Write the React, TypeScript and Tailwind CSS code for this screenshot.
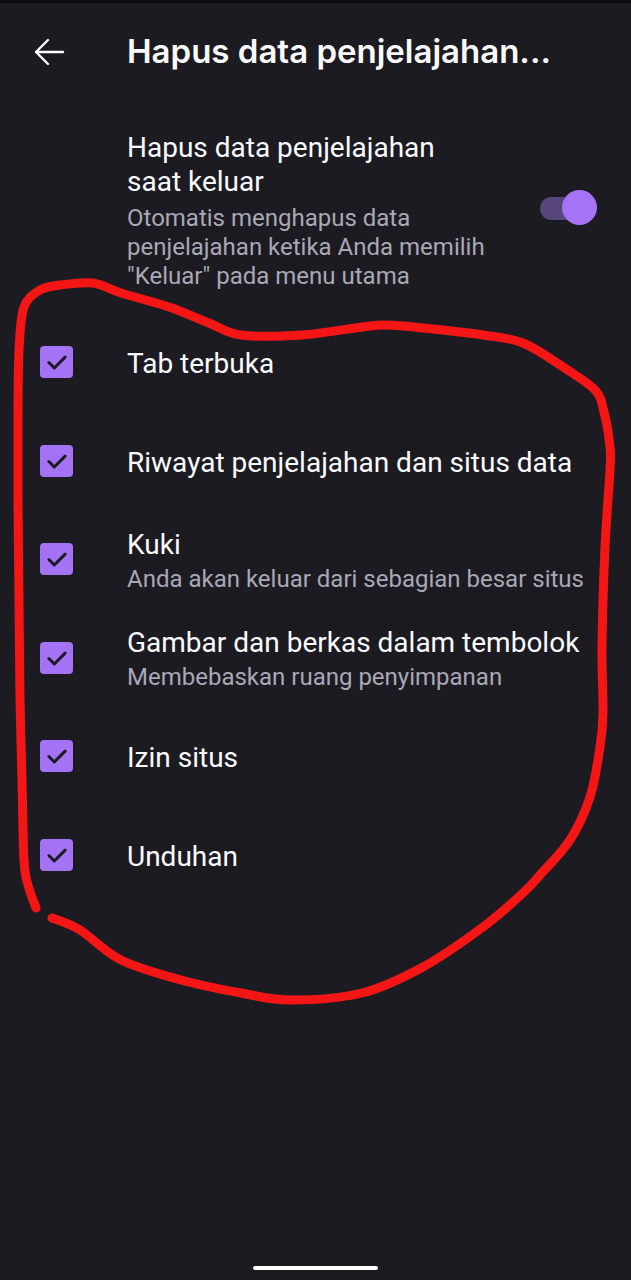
import React from "react";

const pts: [number, number][] = [
  [36, 908], [28, 885], [24, 860], [22, 780], [20, 700], [19, 600], [18, 500], [18, 420],
  [19, 350], [24, 307], [40, 290], [60, 285], [93, 283], [121, 293], [169, 307], [209, 323],
  [241, 335], [302, 335], [362, 327], [386, 325], [423, 328], [483, 335], [523, 343],
  [563, 367], [595, 390], [604, 412], [610, 447], [610, 470], [605, 547], [602, 647],
  [603, 713], [600, 747], [590, 797], [570, 840], [540, 875], [523, 893], [483, 927],
  [423, 967], [362, 993], [290, 1000], [241, 993], [181, 980], [121, 960], [80, 930], [52, 918],
];

function smooth(p: [number, number][]) {
  let d = `M ${p[0][0]} ${p[0][1]}`;
  for (let i = 0; i < p.length - 1; i++) {
    const p0 = p[i - 1] || p[i];
    const p1 = p[i];
    const p2 = p[i + 1];
    const p3 = p[i + 2] || p2;
    const c1x = p1[0] + (p2[0] - p0[0]) / 6;
    const c1y = p1[1] + (p2[1] - p0[1]) / 6;
    const c2x = p2[0] - (p3[0] - p1[0]) / 6;
    const c2y = p2[1] - (p3[1] - p1[1]) / 6;
    d += ` C ${c1x} ${c1y}, ${c2x} ${c2y}, ${p2[0]} ${p2[1]}`;
  }
  return d;
}

function Check() {
  return (
    <div className="w-[33px] h-[32px] rounded-[4px] bg-[#a372f5] flex items-center justify-center shrink-0">
      <svg width="26" height="26" viewBox="0 0 24 24" fill="none">
        <path d="M4.5 12.5 L9.5 17.5 L19.5 7.5" stroke="#1c1b22" strokeWidth="2.8" strokeLinecap="round" strokeLinejoin="round" />
      </svg>
    </div>
  );
}

const rows: { t: string; s?: string }[] = [
  { t: "Tab terbuka" },
  { t: "Riwayat penjelajahan dan situs data" },
  { t: "Kuki", s: "Anda akan keluar dari sebagian besar situs" },
  { t: "Gambar dan berkas dalam tembolok", s: "Membebaskan ruang penyimpanan" },
  { t: "Izin situs" },
  { t: "Unduhan" },
];

export default function App() {
  return (
    <div
      className="relative w-[631px] h-[1280px] bg-[#1c1b22] overflow-hidden text-[#fbfbfe]"
      style={{ fontFamily: "Roboto, 'Noto Sans', sans-serif" }}
    >
      <div className="h-[3px] bg-[#0c0b10]" />
      <div className="h-[97px] flex items-center pl-[33px]">
        <svg width="32" height="32" viewBox="0 0 32 32" fill="none" className="shrink-0">
          <path d="M30 16 H3 M15 4 L3 16 L15 28" stroke="#fbfbfe" strokeWidth="2.4" strokeLinecap="round" strokeLinejoin="round" />
        </svg>
        <div
          className="ml-[62px] text-[33px] font-semibold whitespace-nowrap"
          style={{ fontFamily: "Inter, 'Noto Sans', sans-serif" }}
        >
          Hapus data penjelajahan...
        </div>
      </div>

      <div className="flex items-center pl-[127px] pr-[34px] pt-[31px]">
        <div className="flex-1">
          <div className="text-[28px] leading-[34px] w-[330px]">Hapus data penjelajahan saat keluar</div>
          <div className="mt-[5px] text-[24px] leading-[29px] text-[#aaa8b5] w-[385px]">
            Otomatis menghapus data penjelajahan ketika Anda memilih "Keluar" pada menu utama
          </div>
        </div>
        <div className="relative w-[57px] h-[36px] shrink-0 mb-[6px]">
          <div className="absolute left-0 top-[7px] w-[50px] h-[23px] rounded-full bg-[#574679]" />
          <div className="absolute right-0 top-0 w-[35px] h-[35px] rounded-full bg-[#a673f5]" />
        </div>
      </div>

      <div className="mt-[22px]">
        {rows.map((r) => (
          <div key={r.t} className="h-[98.5px] flex items-center pl-[40px]">
            <Check />
            <div className="ml-[54px] whitespace-nowrap pt-[4px]">
              <div className="text-[28px] leading-[32px]">{r.t}</div>
              {r.s && <div className="mt-[3px] text-[24px] leading-[30px] text-[#aaa8b5]">{r.s}</div>}
            </div>
          </div>
        ))}
      </div>

      <div className="absolute left-[253px] top-[1266px] w-[125px] h-[4px] rounded-full bg-white" />

      <svg className="absolute left-0 top-0 pointer-events-none" width="631" height="1280" viewBox="0 0 631 1280">
        <path d={smooth(pts)} stroke="#f41515" strokeWidth="9" fill="none" strokeLinecap="round" strokeLinejoin="round" />
      </svg>
    </div>
  );
}
